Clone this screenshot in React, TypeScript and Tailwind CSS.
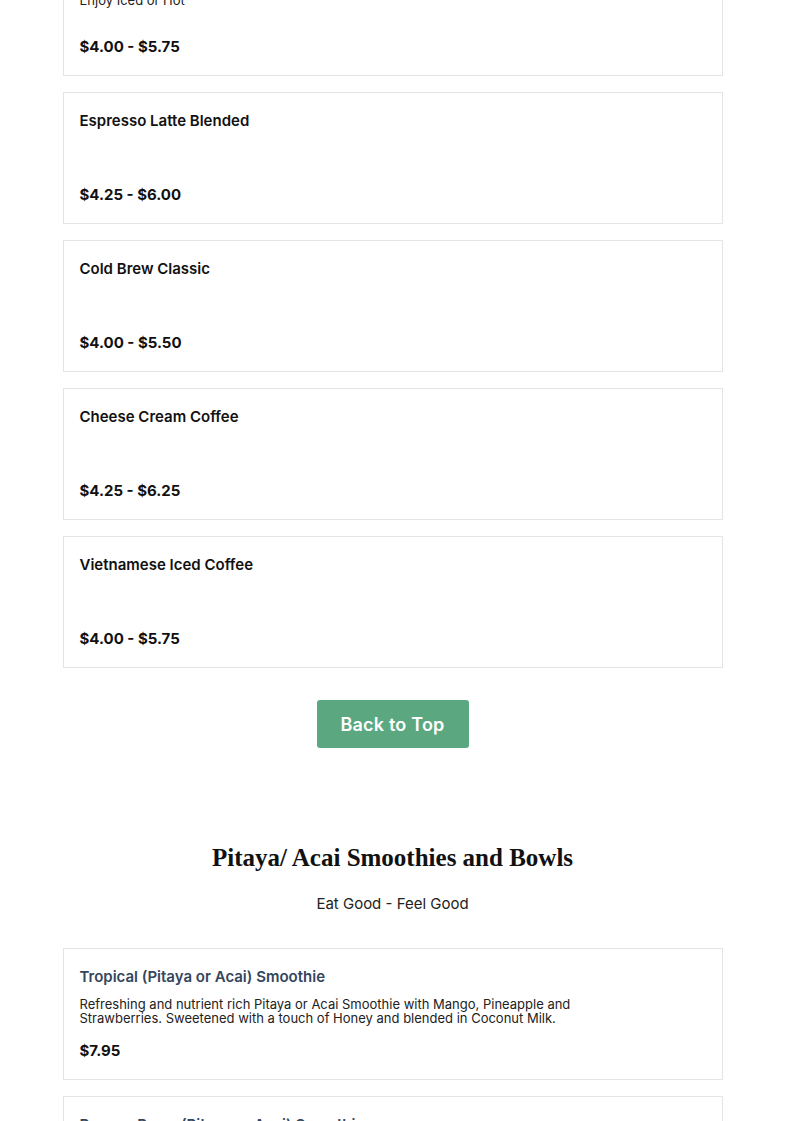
type Item = {
  name: string;
  desc?: string;
  price: string;
  accent?: boolean;
};

const coffee: Item[] = [
  { name: 'Iced Latte', desc: 'Enjoy Iced or Hot', price: '$4.00 - $5.75' },
  { name: 'Espresso Latte Blended', price: '$4.25 - $6.00' },
  { name: 'Cold Brew Classic', price: '$4.00 - $5.50' },
  { name: 'Cheese Cream Coffee', price: '$4.25 - $6.25' },
  { name: 'Vietnamese Iced Coffee', price: '$4.00 - $5.75' },
];

const smoothies: Item[] = [
  {
    name: 'Tropical (Pitaya or Acai) Smoothie',
    desc: 'Refreshing and nutrient rich Pitaya or Acai Smoothie with Mango, Pineapple and Strawberries. Sweetened with a touch of Honey and blended in Coconut Milk.',
    price: '$7.95',
    accent: true,
  },
  {
    name: 'Banana Berry (Pitaya or Acai) Smoothie',
    desc: 'Pitaya or Acai blended with Banana, Strawberries and Blueberries.',
    price: '$7.95',
    accent: true,
  },
];

function MenuCard({ item }: { item: Item }) {
  return (
    <div className="border border-[#e4e4e4] bg-white px-4 pt-4 pb-4">
      <h3
        className={
          'text-[15px] leading-6 font-semibold ' +
          (item.accent ? 'text-[#34465c]' : 'text-[#111111]')
        }
      >
        {item.name}
      </h3>
      <p className="mt-2 min-h-[28px] max-w-[500px] text-[13px] leading-[14px] text-[#222222]">
        {item.desc}
      </p>
      <div className="mt-[14px] text-[15px] leading-6 font-bold text-[#111111]">
        {item.price}
      </div>
    </div>
  );
}

export default function App() {
  return (
    <div
      className="min-h-screen bg-white"
      style={{ fontFamily: 'Inter, "Noto Sans", sans-serif' }}
    >
      <div className="mx-auto mt-[-56px] w-[660px]">
        <div className="flex flex-col gap-4">
          {coffee.map((c) => (
            <MenuCard key={c.name} item={c} />
          ))}
        </div>

        <div className="mt-8 flex justify-center">
          <button className="h-12 w-[152px] rounded-[3px] bg-[#5ba77f] text-[18px] font-semibold tracking-[0.2px] text-white">
            Back to Top
          </button>
        </div>

        <h2
          className="mt-[92px] text-center text-[25px] leading-9 font-bold text-[#111111]"
          style={{ fontFamily: '"Liberation Serif", serif' }}
        >
          Pitaya/ Acai Smoothies and Bowls
        </h2>
        <p className="mt-4 text-center text-[15px] leading-6 text-[#222222]">
          Eat Good - Feel Good
        </p>

        <div className="mt-8 flex flex-col gap-4 pb-10">
          {smoothies.map((s) => (
            <MenuCard key={s.name} item={s} />
          ))}
        </div>
      </div>
    </div>
  );
}
